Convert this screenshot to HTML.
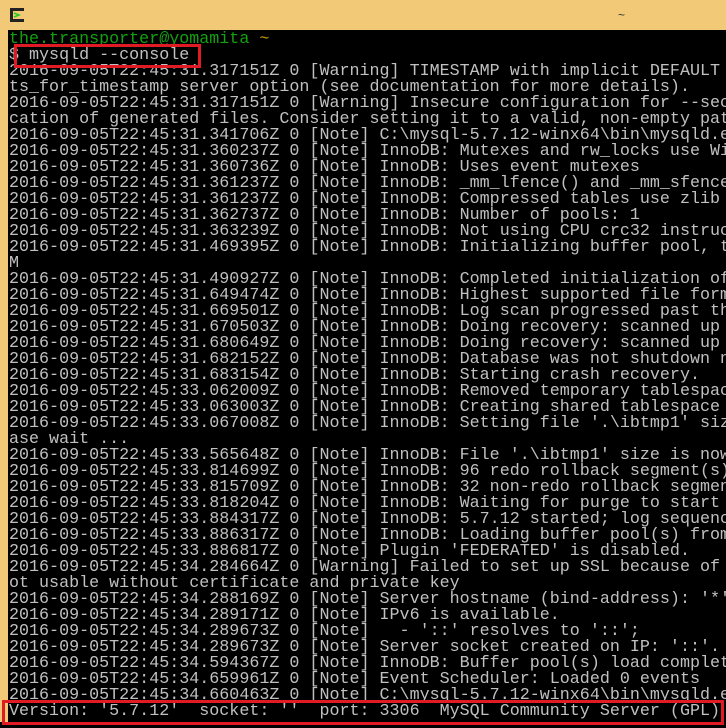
<!DOCTYPE html>
<html><head><meta charset="utf-8"><style>
html,body{margin:0;padding:0;width:726px;height:728px;overflow:hidden;background:#000}
.title{position:absolute;left:0;top:0;width:726px;height:30px;background:#f2c977}
.lb{position:absolute;left:0;top:30px;width:8px;height:692px;background:#f2c977}
.term{position:absolute;left:8px;top:30px;width:718px;height:698px;background:#000;overflow:hidden}
pre{margin:2px 0 0 1px;font-family:"Liberation Mono",monospace;font-size:16.7px;line-height:16px;color:#c0c0c0;white-space:pre}
.g{color:#13a10e}.y{color:#c19c00}
.box{position:absolute;border:3px solid #e01b24;box-sizing:border-box}
.tilde{position:absolute;left:618px;top:8px;color:#333;font:12px "Liberation Sans",sans-serif}
</style></head><body>
<div class="title"></div>
<svg style="position:absolute;left:10px;top:8px" width="14" height="14"><rect x="0" y="0" width="14" height="14" fill="#222"/><rect x="3" y="3" width="11" height="8" fill="#f2c977"/><path d="M4 5 L9 7 L4 9" stroke="#2c2" stroke-width="1.5" fill="none"/></svg>
<div class="tilde">~</div>
<div class="lb"></div>
<div class="term"><pre><span class="g">the.transporter@yomamita</span> <span class="y">~</span>
$ mysqld --console
2016-09-05T22:45:31.317151Z 0 [Warning] TIMESTAMP with implicit DEFAULT
ts_for_timestamp server option (see documentation for more details).
2016-09-05T22:45:31.317151Z 0 [Warning] Insecure configuration for --sec
cation of generated files. Consider setting it to a valid, non-empty pat
2016-09-05T22:45:31.341706Z 0 [Note] C:\mysql-5.7.12-winx64\bin\mysqld.e
2016-09-05T22:45:31.360237Z 0 [Note] InnoDB: Mutexes and rw_locks use Wi
2016-09-05T22:45:31.360736Z 0 [Note] InnoDB: Uses event mutexes
2016-09-05T22:45:31.361237Z 0 [Note] InnoDB: _mm_lfence() and _mm_sfence
2016-09-05T22:45:31.361237Z 0 [Note] InnoDB: Compressed tables use zlib
2016-09-05T22:45:31.362737Z 0 [Note] InnoDB: Number of pools: 1
2016-09-05T22:45:31.363239Z 0 [Note] InnoDB: Not using CPU crc32 instruc
2016-09-05T22:45:31.469395Z 0 [Note] InnoDB: Initializing buffer pool, t
M
2016-09-05T22:45:31.490927Z 0 [Note] InnoDB: Completed initialization of
2016-09-05T22:45:31.649474Z 0 [Note] InnoDB: Highest supported file form
2016-09-05T22:45:31.669501Z 0 [Note] InnoDB: Log scan progressed past th
2016-09-05T22:45:31.670503Z 0 [Note] InnoDB: Doing recovery: scanned up
2016-09-05T22:45:31.680649Z 0 [Note] InnoDB: Doing recovery: scanned up
2016-09-05T22:45:31.682152Z 0 [Note] InnoDB: Database was not shutdown n
2016-09-05T22:45:31.683154Z 0 [Note] InnoDB: Starting crash recovery.
2016-09-05T22:45:33.062009Z 0 [Note] InnoDB: Removed temporary tablespac
2016-09-05T22:45:33.063003Z 0 [Note] InnoDB: Creating shared tablespace
2016-09-05T22:45:33.067008Z 0 [Note] InnoDB: Setting file '.\ibtmp1' siz
ase wait ...
2016-09-05T22:45:33.565648Z 0 [Note] InnoDB: File '.\ibtmp1' size is now
2016-09-05T22:45:33.814699Z 0 [Note] InnoDB: 96 redo rollback segment(s)
2016-09-05T22:45:33.815709Z 0 [Note] InnoDB: 32 non-redo rollback segmen
2016-09-05T22:45:33.818204Z 0 [Note] InnoDB: Waiting for purge to start
2016-09-05T22:45:33.884317Z 0 [Note] InnoDB: 5.7.12 started; log sequenc
2016-09-05T22:45:33.886317Z 0 [Note] InnoDB: Loading buffer pool(s) from
2016-09-05T22:45:33.886817Z 0 [Note] Plugin 'FEDERATED' is disabled.
2016-09-05T22:45:34.284664Z 0 [Warning] Failed to set up SSL because of
ot usable without certificate and private key
2016-09-05T22:45:34.288169Z 0 [Note] Server hostname (bind-address): '*'
2016-09-05T22:45:34.289171Z 0 [Note] IPv6 is available.
2016-09-05T22:45:34.289673Z 0 [Note]   - '::' resolves to '::';
2016-09-05T22:45:34.289673Z 0 [Note] Server socket created on IP: '::'.
2016-09-05T22:45:34.594367Z 0 [Note] InnoDB: Buffer pool(s) load complet
2016-09-05T22:45:34.659961Z 0 [Note] Event Scheduler: Loaded 0 events
2016-09-05T22:45:34.660463Z 0 [Note] C:\mysql-5.7.12-winx64\bin\mysqld.e
Version: '5.7.12'  socket: ''  port: 3306  MySQL Community Server (GPL)
</pre></div>
<div class="box" style="left:14px;top:44px;width:187px;height:24px"></div>
<div class="box" style="left:2px;top:700px;width:722px;height:25px"></div>
</body></html>
